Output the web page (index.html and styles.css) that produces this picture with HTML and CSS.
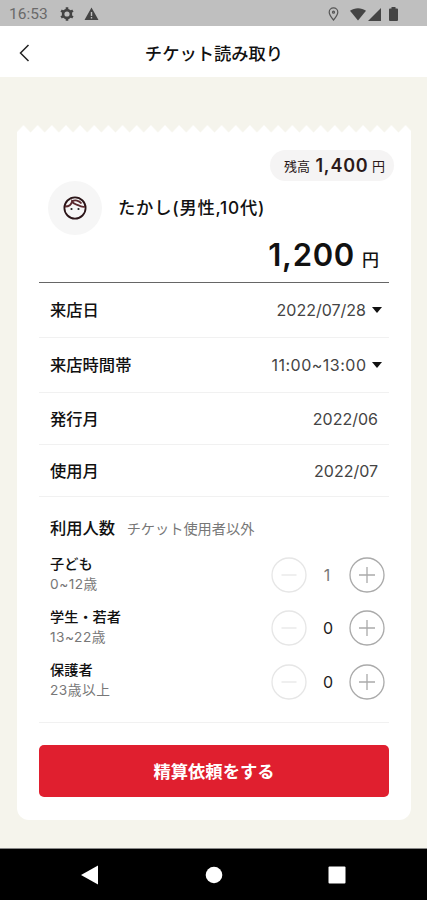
FILE: index.html
```html
<!DOCTYPE html>
<html lang="ja">
<head>
<meta charset="utf-8">
<title>チケット読み取り</title>
<link rel="stylesheet" href="styles.css">
</head>
<body>
<div class="status">
  <span class="clock">16:53</span>
  <svg class="gear" width="16" height="16" viewBox="0 0 16 16"><circle cx="8" cy="8" r="3.900"/><path d="M8 1.200v3M8 11.800v3M2.100 4.600l2.600 1.500M11.300 9.900l2.600 1.500M2.100 11.400l2.600-1.500M11.300 6.100l2.600-1.500"/></svg>
  <svg class="warn" width="15" height="14" viewBox="0 0 15 14"><path fill-rule="evenodd" d="M7.500.5 14.500 13H.5zM6.800 5v4h1.400V5zm0 5v1.500h1.400V10z"/></svg>
  <svg class="pin" width="11" height="14" viewBox="0 0 11 14"><path d="M5.500 13C3 10 1.200 7.600 1.200 5.200a4.300 4.300 0 0 1 8.600 0C9.800 7.600 8 10 5.500 13z"/><circle cx="5.500" cy="5.200" r="1"/></svg>
  <svg class="wifi" width="16" height="13" viewBox="0 0 16 13"><path d="M0 2.800C4.500-.7 11.500-.7 16 2.800L8 12.600z"/></svg>
  <svg class="signal" width="13" height="13" viewBox="0 0 13 13"><path d="M13 0v13H0z"/></svg>
  <svg class="battery" width="9" height="14" viewBox="0 0 9 14"><path d="M2.500 1.500V0h4v1.500H8q1 0 1 1V13q0 1-1 1H1q-1 0-1-1V2.500q0-1 1-1z"/></svg>
</div>
<header class="bar">
  <svg class="back" width="11" height="18" viewBox="0 0 11 18"><path d="M9.500 1 1.500 9l8 8"/></svg>
  <h1>チケット読み取り</h1>
</header>
<main>
  <svg class="teeth" width="394" height="9"><defs><pattern id="zig" x="6.500" width="14.150" height="9" patternUnits="userSpaceOnUse"><path d="M0 0 7.075 7.500 14.150 0V9H0z"/></pattern></defs><rect width="394" height="9" fill="url(#zig)"/></svg>
  <section class="card">
    <div class="balance"><span class="cap">残高</span><b>1,400</b><span class="yen">円</span></div>
    <div class="person">
      <span class="avatar"><svg width="24" height="24" viewBox="0 0 24 24"><circle cx="12" cy="12" r="10.600"/><path class="hair" d="M2 10.500c4 0 6.500-2 7-5 2 3.500 5 2.500 7 4 1.500 1.200 3 1.500 6 1.200M9 5.500C12 3.500 16 4.500 18.500 7.500"/><circle class="eye" cx="8.500" cy="13" r="1.100"/><circle class="eye" cx="15.500" cy="13" r="1.100"/></svg></span>
      <span class="name">たかし(男性,10代)</span>
    </div>
    <div class="amount"><b>1,200</b><span>円</span></div>
    <div class="row tall first"><span class="label">来店日</span><span class="value">2022/07/28</span><i class="caret"></i></div>
    <div class="row tall"><span class="label">来店時間帯</span><span class="value time">11:00~13:00</span><i class="caret"></i></div>
    <div class="row"><span class="label">発行月</span><span class="value">2022/06</span></div>
    <div class="row"><span class="label">使用月</span><span class="value">2022/07</span></div>
    <div class="people">
      <div class="heading"><span class="label">利用人数</span><small>チケット使用者以外</small></div>
      <div class="group"><div class="who"><b>子ども</b><span>0~12歳</span></div><div class="stepper"><svg class="off" width="36" height="36"><circle cx="18" cy="18" r="17"/><path d="M10.500 18h15"/></svg><span class="count dim">1</span><svg width="36" height="36"><circle cx="18" cy="18" r="17"/><path d="M10 18h16M18 10v16"/></svg></div></div>
      <div class="group"><div class="who"><b>学生・若者</b><span>13~22歳</span></div><div class="stepper"><svg class="off" width="36" height="36"><circle cx="18" cy="18" r="17"/><path d="M10.500 18h15"/></svg><span class="count">0</span><svg width="36" height="36"><circle cx="18" cy="18" r="17"/><path d="M10 18h16M18 10v16"/></svg></div></div>
      <div class="group last"><div class="who"><b>保護者</b><span>23歳以上</span></div><div class="stepper"><svg class="off" width="36" height="36"><circle cx="18" cy="18" r="17"/><path d="M10.500 18h15"/></svg><span class="count">0</span><svg width="36" height="36"><circle cx="18" cy="18" r="17"/><path d="M10 18h16M18 10v16"/></svg></div></div>
    </div>
    <button class="submit">精算依頼をする</button>
  </section>
</main>
<nav class="nav">
  <svg width="18" height="20" viewBox="0 0 18 20"><path d="M0 10 17 .5v19z"/></svg>
  <svg width="18" height="18"><circle cx="9" cy="9" r="8.300"/></svg>
  <svg width="18" height="18"><rect x=".5" y=".5" width="17" height="17" rx="1"/></svg>
</nav>
</body>
</html>
```
FILE: styles.css
```css
* { box-sizing: border-box; }
body {
  margin: 0;
  width: 427px;
  height: 900px;
  overflow: hidden;
  display: flex;
  flex-direction: column;
  background: #f5f4ec;
  color: #111;
  font-family: Inter, "Noto Sans CJK JP", sans-serif;
}
svg { display: block; flex: none; }
.status {
  height: 26px;
  flex: none;
  display: flex;
  align-items: center;
  padding: 2px 29px 0 9px;
  background: #bfbfbf;
  fill: #444;
}
.clock {
  width: 50px;
  font: 15.500px/24px Roboto, sans-serif;
  color: #6a6a6a;
}
.gear { fill: none; stroke: #444; stroke-width: 2.600; }
.warn { margin-left: 9px; }
.pin { margin-left: auto; fill: none; stroke: #555; stroke-width: 1.200; }
.wifi { margin-left: 11px; }
.signal { margin-left: 2px; }
.battery { margin-left: 8px; }
.bar {
  height: 51px;
  flex: none;
  display: flex;
  align-items: center;
  padding: 3px 0 0 19px;
  background: #fff;
}
.back { fill: none; stroke: #222; stroke-width: 1.500; }
h1 {
  flex: 1;
  margin: 0 29px 0 0;
  padding-top: 2px;
  text-align: center;
  font-size: 17.300px;
  line-height: 24px;
  font-weight: 500;
}
main { flex: 1; padding: 48px 16px 0 17px; }
.teeth { fill: #fff; }
.card {
  height: 687px;
  margin-top: -1px;
  padding: 17px 22px 0;
  background: #fff;
  border-radius: 0 0 12px 12px;
  display: flex;
  flex-direction: column;
}
.balance {
  align-self: flex-end;
  width: 124px;
  height: 31px;
  margin-right: -5px;
  padding: 0 9px 0 14px;
  display: flex;
  align-items: center;
  justify-content: space-between;
  background: #f5f4f4;
  border-radius: 16px;
  color: #2b1a1a;
  line-height: 30px;
}
.balance b { font-size: 18px; font-weight: 600; letter-spacing: .8px; margin-left: 2px; }
.cap { font-size: 13px; font-weight: 400; }
.yen { font-size: 13px; font-weight: 400; }
.person {
  height: 54px;
  display: flex;
  align-items: center;
  gap: 16px;
  padding-left: 9px;
}
.avatar {
  width: 54px;
  height: 54px;
  border-radius: 50%;
  background: #f6f6f6;
  display: grid;
  place-items: center;
}
.avatar svg { fill: none; stroke: #2b1518; stroke-width: 1.800; }
.avatar .hair { stroke: #5b2a2f; }
.avatar .eye { fill: #222; stroke: none; }
.name { font-size: 17.300px; font-weight: 500; letter-spacing: .8px; line-height: 24px; }
.amount {
  height: 47px;
  display: flex;
  justify-content: flex-end;
  align-items: baseline;
  gap: 7px;
  padding-right: 10px;
  line-height: 40px;
}
.amount b { font-size: 31px; font-weight: 600; letter-spacing: .7px; }
.amount span { font-size: 17px; font-weight: 500; }
.row {
  height: 52px;
  display: flex;
  align-items: center;
  padding: 0 11px;
  border-bottom: 1px solid #f1f1f1;
}
.row.tall { height: 55px; padding-right: 7px; }
.row.first { height: 56px; border-top: 1px solid #666; }
.label { font-size: 16.300px; line-height: 24px; font-weight: 500; }
.value {
  margin-left: auto;
  font-size: 16px;
  color: #444;
}
.time { letter-spacing: .5px; }
.caret {
  margin-left: 6px;
  border: 5px solid transparent;
  border-top: 6px solid #111;
  border-bottom: 0;
}
.time + .caret { margin-left: 5.500px; }
.people {
  height: 226px;
  padding: 18px 4px 0 11px;
  border-bottom: 1px solid #f1f1f1;
}
.heading { display: flex; align-items: center; height: 26px; }
.heading small { margin-left: 11.500px; font-size: 14.200px; color: #777; }
.group { height: 53px; display: flex; justify-content: space-between; }
.who {
  display: flex;
  flex-direction: column;
  padding-top: 12px;
  line-height: 21px;
}
.who b { font-size: 14.200px; font-weight: 500; }
.who span { font-size: 13.700px; color: #777; letter-spacing: .5px; }
.stepper {
  display: flex;
  align-items: center;
  height: 36px;
  margin-top: 16px;
}
.last .stepper { margin-top: 17px; }
.stepper svg { fill: none; stroke: #aaa; stroke-width: 1.300; }
.stepper .off { stroke: #e6e6e6; }
.count { width: 42px; text-align: center; font-size: 16px; color: #222; }
.count.dim { color: #777; padding-right: 2px; }
.submit {
  height: 52px;
  margin-top: 22px;
  border: 0;
  border-radius: 5px;
  background: #e01f2f;
  color: #fff;
  font: 700 17.300px/52px Inter, "Noto Sans CJK JP", sans-serif;
}
.nav {
  height: 52px;
  flex: none;
  display: flex;
  justify-content: space-between;
  align-items: center;
  padding: 0 81px;
  background: #000;
  border-top: 1px solid #888;
  fill: #fff;
}
```
